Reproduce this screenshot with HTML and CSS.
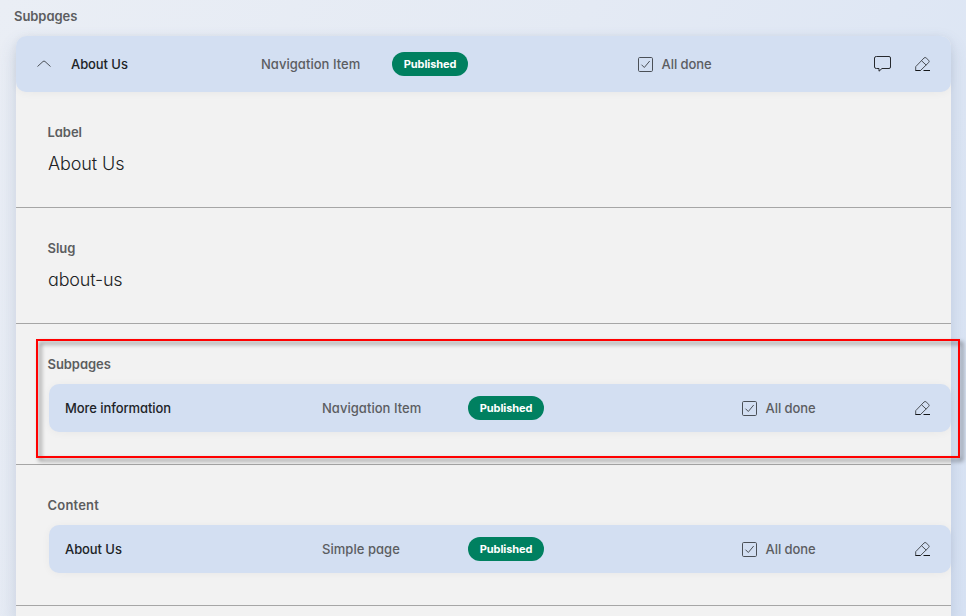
FILE: index.html
```html
<!DOCTYPE html>
<html lang="en">
<head>
<meta charset="utf-8">
<title>Subpages</title>
<link rel="stylesheet" href="styles.css">
</head>
<body>
<svg class="defs" aria-hidden="true">
  <symbol id="check" viewBox="0 0 15 15"><rect x=".5" y=".5" width="14" height="14" rx="1.2"/><path d="M3.5 7.7 6.3 10.5 11.7 4"/></symbol>
  <symbol id="pen" viewBox="0 0 16 16"><path d="M.7 14.5V10.7L9 2Q10.1 .9 11.2 2L13.7 4.3Q14.7 5.4 13.7 6.5L5.5 14.5ZM6.5 4.7 11.2 9.1"/><path class="base" d="M.5 14.5H5.5M8.5 14.5H15"/></symbol>
</svg>
<h2 class="label page-label">Subpages</h2>
<main class="card">
  <header class="bar bar-main">
    <svg class="chevron" viewBox="0 0 14 8"><path d="M.5 6.5 6 1.5Q7 .6 8 1.5L13.5 6.5"/></svg>
    <span class="title">About Us</span>
    <span class="type">Navigation Item</span>
    <span class="pill"><span>Published</span></span>
    <span class="status"><svg class="check"><use href="#check"/></svg><span>All done</span></span>
    <svg class="comment" viewBox="0 0 18 17"><path d="M2.5.5H15Q16.5.5 16.5 2V11Q16.5 12.5 15 12.5H8L5 15.2V12.5H2.5Q.5 12.5.5 11V2Q.5.5 2.5.5Z"/></svg>
    <svg class="pen"><use href="#pen"/></svg>
  </header>
  <section class="field">
    <h3 class="label">Label</h3>
    <p class="value">About Us</p>
  </section>
  <section class="field">
    <h3 class="label">Slug</h3>
    <p class="value slug">about-us</p>
  </section>
  <section class="field nested">
    <div class="highlight"></div>
    <h3 class="label">Subpages</h3>
    <div class="bar bar-sub">
      <span class="title">More information</span>
      <span class="type">Navigation Item</span>
      <span class="pill"><span>Published</span></span>
      <span class="status"><svg class="check"><use href="#check"/></svg><span>All done</span></span>
      <svg class="pen"><use href="#pen"/></svg>
    </div>
  </section>
  <section class="field nested">
    <h3 class="label content-label">Content</h3>
    <div class="bar bar-sub">
      <span class="title">About Us</span>
      <span class="type">Simple page</span>
      <span class="pill"><span>Published</span></span>
      <span class="status"><svg class="check"><use href="#check"/></svg><span>All done</span></span>
      <svg class="pen"><use href="#pen"/></svg>
    </div>
  </section>
</main>
</body>
</html>
```
FILE: styles.css
```css
* { box-sizing: border-box; }
html { height: 616px; overflow: hidden; }
body {
  margin: 0;
  height: 616px;
  overflow: hidden;
  padding: 6px 15px 0 16px;
  background: linear-gradient(120deg, #eaeef5 0%, #e4eaf4 45%, #d8e3f4 100%);
  font: 500 13px/20px Inter, "Liberation Sans", sans-serif;
  font-feature-settings: "cv11";
  color: #202327;
}
.defs { position: absolute; width: 0; height: 0; }
svg { display: block; fill: none; stroke: #4b5057; stroke-width: 1; }
h2, h3, p { margin: 0; }
.label { font-size: 13px; line-height: 20px; font-weight: 600; letter-spacing: -.06px; color: #5c5d5f; white-space: nowrap; }
.field .label { margin-left: -.5px; }
.content-label { letter-spacing: .2px; }
.page-label { margin: 0 0 10px -2px; }
.card {
  height: 580px;
  background: #f2f2f2;
  border-radius: 10px 10px 0 0;
  box-shadow: 0 8px 18px rgba(65, 90, 135, .2);
}
.bar {
  display: grid;
  align-items: center;
  background: #d3dff2;
  border-radius: 10px;
  box-shadow: 0 1px 8px rgba(0, 0, 0, .045);
  white-space: nowrap;
}
.bar-main { height: 56px; padding-left: 21px; grid-template-columns: 34px 190px 131px 246px 236px 41px 16px; }
.bar-sub { height: 48px; padding-left: 16px; grid-template-columns: 257px 146px 274px 173px 16px; }
.chevron { width: 14px; height: 8px; }
.title { letter-spacing: -.08px; }
.type, .status { color: #5b5d61; }
.type { letter-spacing: .04px; }
.pill {
  display: flex;
  align-items: center;
  justify-content: center;
  width: 76px;
  height: 24px;
  border-radius: 12px;
  background: #008060;
  color: #fff;
  font-size: 11px;
  font-weight: 700;
  letter-spacing: -.1px;
}
.status { display: flex; align-items: center; gap: 8.5px; letter-spacing: -.05px; }
.check { width: 15px; height: 15px; }
.comment { width: 18px; height: 17px; stroke: #26292e; }
.pen { width: 16px; height: 16px; }
.base { stroke: #15171a; }
.field { height: 116px; padding: 30px 0 0 32px; border-bottom: 1px solid #a6a6a6; }
.value { margin-top: 10px; font-size: 18px; line-height: 24px; font-weight: 300; letter-spacing: -.1px; color: #202224; }
.slug { letter-spacing: -.2px; }
.nested { position: relative; height: 141px; }
.nested .bar { margin: 10px 0 0 1px; }
.highlight {
  position: absolute;
  left: 20px;
  top: 15px;
  width: 924px;
  height: 119px;
  border: 2px solid #f00;
  filter: drop-shadow(3px 3px 2px rgba(0, 0, 0, .5));
}
```
